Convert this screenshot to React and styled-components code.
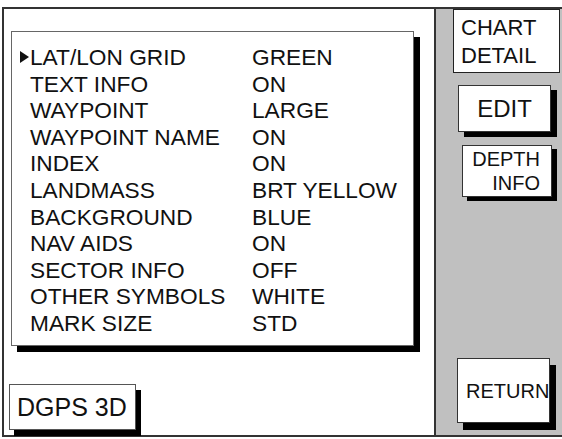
import React from 'react'
import styled, { createGlobalStyle } from 'styled-components'

const GlobalStyle = createGlobalStyle`
  html, body {
    margin: 0;
    padding: 0;
    background: #fff;
  }
  body {
    font-family: "Liberation Sans", Arial, Helvetica, sans-serif;
    color: #111;
  }
`

const Screen = styled.div`
  margin: 7px 0 0 2px;
  width: 560px;
  height: 430px;
  box-sizing: border-box;
  border: 2px solid #333;
  border-right: none;
  display: grid;
  grid-template-columns: 430px 128px;
`

const Main = styled.div`
  display: flex;
  flex-direction: column;
  align-items: flex-start;
  padding: 22px 0 5px 5px;
  background: #fff;
`

const MenuBox = styled.div`
  margin-left: 2px;
  width: 403px;
  height: 315px;
  box-sizing: border-box;
  border: 1px solid #666;
  background: #fff;
  box-shadow: 6px 6px 0 #000;
  padding: 12px 0 0 8px;
`

const Row = styled.div`
  display: grid;
  grid-template-columns: 10px 222px auto;
  align-items: center;
  height: 26.6px;
  font-size: 22.7px;
  line-height: 26.6px;
  white-space: nowrap;
`

const Cursor = styled.span`
  width: 0;
  height: 0;
  margin-top: -1px;
  border-top: 6.5px solid transparent;
  border-bottom: 6.5px solid transparent;
  border-left: 9px solid ${({ $on }) => ($on ? '#111' : 'transparent')};
`

const Status = styled.div`
  margin-top: auto;
  width: 127px;
  height: 46px;
  box-sizing: border-box;
  border: 1px solid #555;
  background: #fff;
  box-shadow: 5px 6px 0 #000;
  display: flex;
  align-items: center;
  padding-left: 7px;
  font-size: 25px;
  white-space: nowrap;
`

const Sidebar = styled.div`
  display: flex;
  flex-direction: column;
  align-items: flex-start;
  background: #c0c0c0;
  border-left: 2px solid #333;
  padding-bottom: 12px;
`

const Key = styled.div`
  box-sizing: border-box;
  margin-top: ${({ $top }) => $top};
  margin-left: ${({ $left }) => $left}px;
  width: ${({ $w }) => $w}px;
  height: ${({ $h }) => $h}px;
  border: ${({ $title }) => ($title ? '1.5px solid #222' : '1px solid #333')};
  background: #fff;
  box-shadow: ${({ $shadow }) => $shadow || 'none'};
  display: flex;
  flex-direction: column;
  justify-content: ${({ $title }) => ($title ? 'flex-start' : 'center')};
  align-items: ${({ $align }) => $align || 'flex-start'};
  padding: ${({ $pad }) => $pad || '0'};
  font-size: ${({ $size }) => $size}px;
  line-height: ${({ $lh }) => $lh}px;
  white-space: nowrap;
`

const items = [
  ['LAT/LON GRID', 'GREEN'],
  ['TEXT INFO', 'ON'],
  ['WAYPOINT', 'LARGE'],
  ['WAYPOINT NAME', 'ON'],
  ['INDEX', 'ON'],
  ['LANDMASS', 'BRT YELLOW'],
  ['BACKGROUND', 'BLUE'],
  ['NAV AIDS', 'ON'],
  ['SECTOR INFO', 'OFF'],
  ['OTHER SYMBOLS', 'WHITE'],
  ['MARK SIZE', 'STD'],
]

export default function App() {
  const selected = 0
  return (
    <>
      <GlobalStyle />
      <Screen>
        <Main>
          <MenuBox>
            {items.map(([label, value], i) => (
              <Row key={label}>
                <Cursor $on={i === selected} />
                <span>{label}</span>
                <span>{value}</span>
              </Row>
            ))}
          </MenuBox>
          <Status>DGPS 3D</Status>
        </Main>
        <Sidebar>
          <Key $title $top="0" $left={17} $w={107} $h={64} $pad="4px 0 0 7px" $size={22} $lh={28}>
            <span>CHART</span>
            <span>DETAIL</span>
          </Key>
          <Key $top="12px" $left={22} $w={93} $h={47} $shadow="6px 5px 0 #000" $align="center" $size={24} $lh={28}>
            EDIT
          </Key>
          <Key $top="13px" $left={26} $w={90} $h={52} $shadow="5px 4px 0 #000" $align="flex-end" $pad="0 11px 0 0" $size={20} $lh={24}>
            <span>DEPTH</span>
            <span>INFO</span>
          </Key>
          <Key $top="auto" $left={21} $w={93} $h={65} $shadow="6px 7px 0 #000" $pad="0 0 0 8px" $size={20} $lh={24}>
            RETURN
          </Key>
        </Sidebar>
      </Screen>
    </>
  )
}
